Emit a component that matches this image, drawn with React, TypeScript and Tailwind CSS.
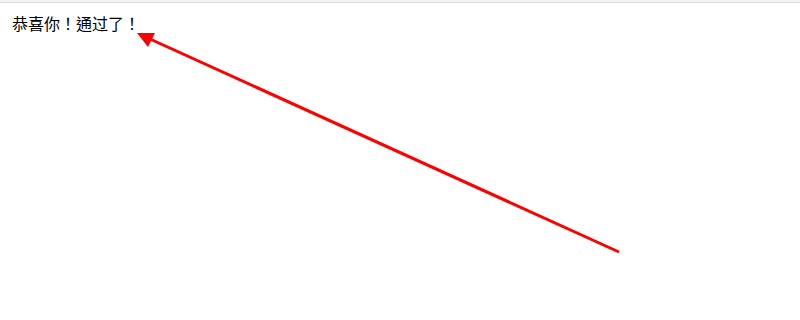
export default function App() {
  return (
    <div className="relative w-[800px] h-[320px] bg-white overflow-hidden">
      <div className="h-[2px] bg-[#f3f3f3] border-b border-[#dedede] box-content" />
      <div className="px-3 pt-[10px] text-[16px] leading-[20px] text-black font-['Noto_Sans_CJK_TC',sans-serif]">
        恭喜你！通过了！
      </div>
      <svg className="absolute left-0 top-0" width="800" height="320" viewBox="0 0 800 320">
        <line x1="619" y1="252" x2="150" y2="39" stroke="#ff0000" strokeWidth="3" />
        <polygon points="137,33 155,33 148,47" fill="#ff0000" />
      </svg>
    </div>
  );
}
